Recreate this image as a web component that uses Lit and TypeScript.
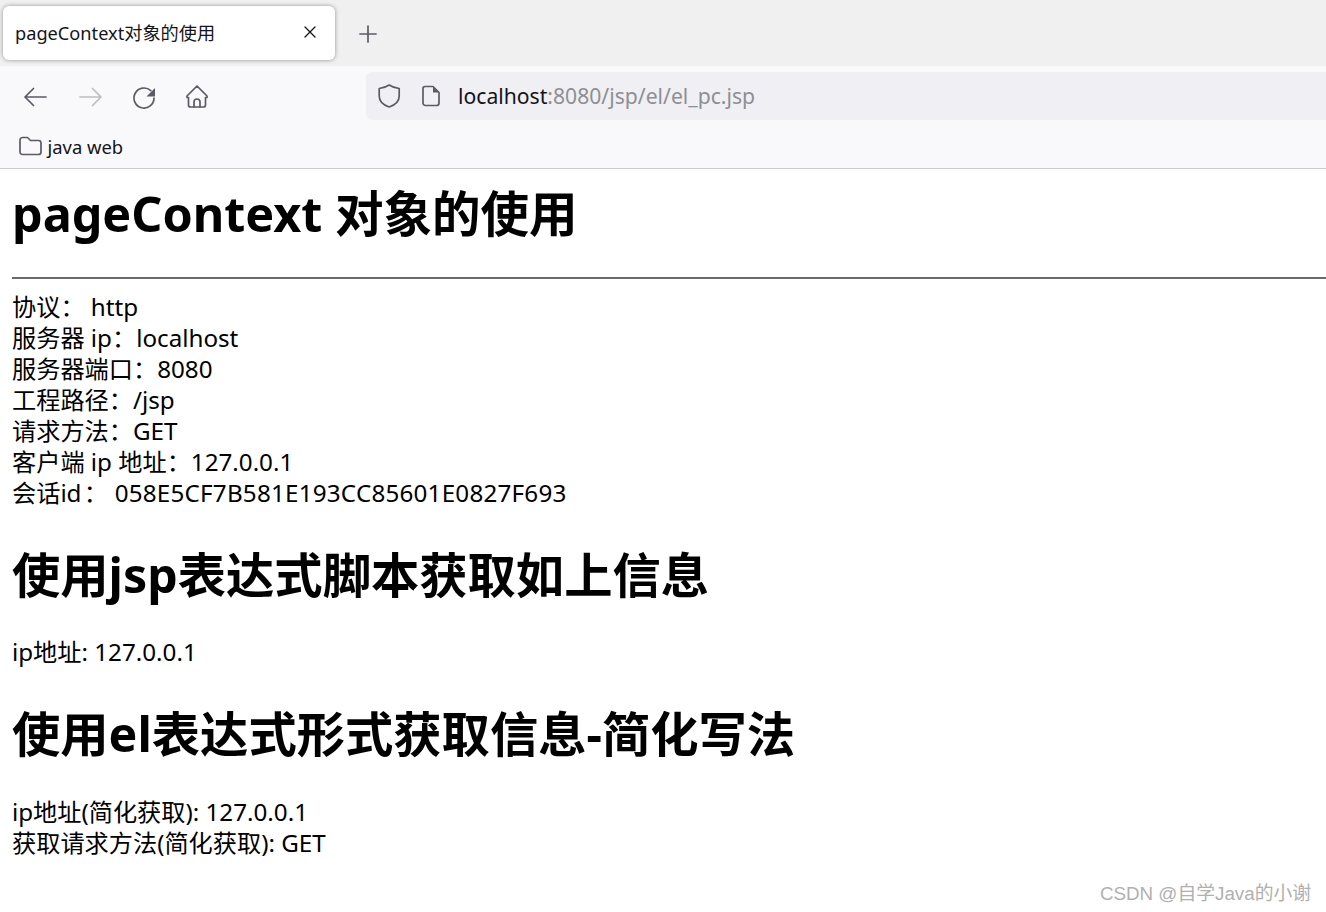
import { LitElement, html, css } from "lit";
import { customElement } from "lit/decorators.js";

@customElement("app-root")
export class AppRoot extends LitElement {
  static styles = css`
    :host { display: block; position: relative; height: 912px; width: 1326px; overflow: hidden; background: #fff; color: #000;
      font-family: "Noto Sans", "Noto Sans CJK SC", sans-serif; }
    svg { display: block; fill: none; stroke: #5b5b66; stroke-width: 1.7; stroke-linecap: round; stroke-linejoin: round; flex: none; overflow: visible; }
    .tabs { height: 66px; background: #f0f0f1; display: flex; align-items: flex-start; padding: 6px 0 0 3px; box-sizing: border-box; }
    .tab { width: 332px; height: 54px; box-sizing: border-box; background: #fff; border-radius: 6px; box-shadow: 0 0 4px rgba(0,0,0,.4);
      display: flex; align-items: center; justify-content: space-between; padding: 0 18px 2px 12px; font-size: 18.2px; color: #15141a; }
    .close { stroke: #15141a; stroke-width: 1.3; }
    .plus { margin: 18px 0 0 23px; }
    .nav { height: 62px; background: #f9f9fb; display: flex; align-items: flex-start; padding: 6px 0 0 24px; box-sizing: border-box; }
    .navicons { display: flex; align-items: center; height: 48px; width: 342px; flex: none; }
    .navicons svg { margin-right: 30px; }
    .navicons .fwd { stroke: #bdbdc2; }
    .url { flex: 1; height: 48px; background: #f0f0f4; border-radius: 6px 0 0 6px; display: flex; align-items: center; padding-left: 12px; }
    .url .doc { margin-left: 20px; }
    .host { margin: 0 0 2px 18px; font-size: 21.15px; color: #15141a; }
    .host span { color: #8e8e93; }
    .bm { height: 41px; background: #f9f9fb; border-bottom: 1px solid #ccc; box-sizing: border-box; display: flex; align-items: center; padding: 0 0 4px 19px; gap: 5.500px; font-size: 18.4px; color: #15141a; }
    main { padding: 0 0 0 12px; font-size: 24.2px; line-height: 31px; }
    h1 { margin: 0; font-size: 48.3px; font-weight: 700; line-height: 64px; }
    .h0 { padding-top: 12px; font-size: 48.5px; }
    hr { margin: 32px 0 12px; border: 0; border-top: 2px solid #6a6a6a; }
    .h2 { margin-top: 33.500px; }
    .h2b { margin-top: 34.500px; }
    .p { margin-top: 30px; }
    .p2 { margin-top: 31px; }
    .tight { margin-left: -4px; letter-spacing: .22px; }
    .wm { position: absolute; right: 15px; top: 882px; font-family: "Liberation Sans", "Noto Sans CJK SC", sans-serif; font-size: 18.8px; color: #b0b0b0; line-height: 24px; }
  `;

  render() {
    return html`
      <div class="tabs">
        <div class="tab">
          <span>pageContext对象的使用</span>
          <svg class="close" width="14" height="14" viewBox="0 0 14 14"><path d="M2 2l10 10M12 2L2 12"/></svg>
        </div>
        <svg class="plus" width="20" height="20" viewBox="0 0 20 20"><path d="M10 2v16M2 10h16"/></svg>
      </div>
      <div class="nav">
        <div class="navicons">
          <svg width="24" height="24" viewBox="0 0 24 24"><path d="M22 13H1M9.500 4.500L1 13l8.500 8.500"/></svg>
          <svg class="fwd" width="24" height="24" viewBox="0 0 24 24"><path d="M2 13h21M14.500 4.500L23 13l-8.500 8.500"/></svg>
          <svg width="24" height="24" viewBox="0 0 24 24"><path d="M22 14a10 10 0 1 1-3.200-7.300"/><path d="M23 4v8.500h-8.500z" fill="#5b5b66" stroke="none"/></svg>
          <svg width="24" height="24" viewBox="0 0 24 24"><path d="M11 2L1 12v1.500h1.500V21a2 2 0 0 0 2 2h13a2 2 0 0 0 2-2v-7.500H21V12z"/><path d="M8 23v-5a3 3 0 0 1 6 0v5"/></svg>
        </div>
        <div class="url">
          <svg width="24" height="26" viewBox="0 0 24 26"><path d="M11.200 2c3 2 6 3 10 3.500V13c0 5-4 9-10 11-6-2-10-6-10-11V5.500c4-.5 7-1.500 10-3.500z"/></svg>
          <svg class="doc" width="18" height="22" viewBox="0 0 18 22"><path d="M3 1.500h8l6 6V18a2.500 2.500 0 0 1-2.500 2.500h-11A2.500 2.500 0 0 1 1 18V3.500a2 2 0 0 1 2-2z"/><path d="M11 1.500l6 6h-6z" fill="#5b5b66" stroke="none"/></svg>
          <div class="host">localhost<span>:8080/jsp/el/el_pc.jsp</span></div>
        </div>
      </div>
      <div class="bm">
        <svg width="23" height="20" viewBox="0 0 23 20"><path d="M3.500 1.500h5l3 3h8a2.500 2.500 0 0 1 2.500 2.500v9a2.500 2.500 0 0 1-2.500 2.500h-16A2.500 2.500 0 0 1 1 16V4a2.500 2.500 0 0 1 2.500-2.500z"/></svg>
        <span>java web</span>
      </div>
      <main>
        <h1 class="h0">pageContext 对象的使用</h1>
        <hr />
        <div>协议： http</div>
        <div>服务器 ip：localhost</div>
        <div>服务器端口：8080</div>
        <div>工程路径：/jsp</div>
        <div>请求方法：GET</div>
        <div>客户端 ip 地址：127.0.0.1</div>
        <div>会话id <span class="tight">： 058E5CF7B581E193CC85601E0827F693</span></div>
        <h1 class="h2">使用jsp表达式脚本获取如上信息</h1>
        <div class="p">ip地址: 127.0.0.1</div>
        <h1 class="h2b">使用el表达式形式获取信息-简化写法</h1>
        <div class="p2">ip地址(简化获取): 127.0.0.1</div>
        <div>获取请求方法(简化获取): GET</div>
      </main>
      <div class="wm">CSDN @自学Java的小谢</div>
    `;
  }
}
